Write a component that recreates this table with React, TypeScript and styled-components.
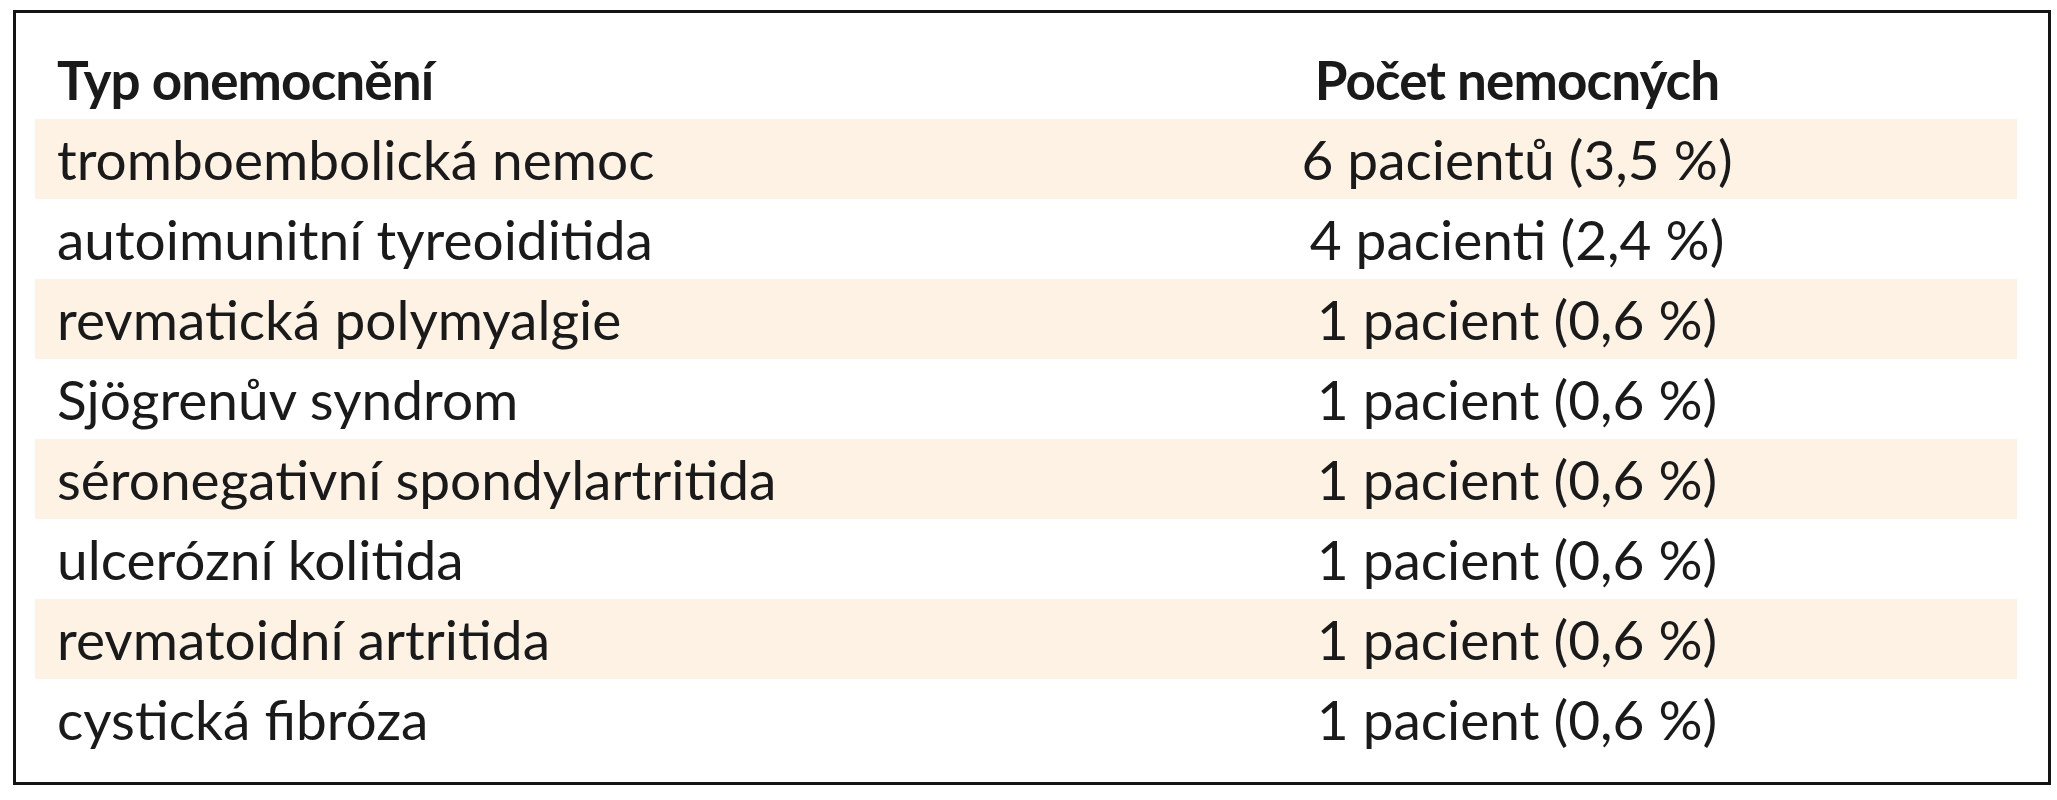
import React from 'react'
import styled, { createGlobalStyle } from 'styled-components'

const GlobalStyle = createGlobalStyle`
  html, body {
    margin: 0;
    padding: 0;
    background: #fff;
  }
  body {
    font-family: Lato, "Noto Sans", sans-serif;
    color: #1a1a1a;
  }
`

const Frame = styled.div`
  box-sizing: border-box;
  width: 2038px;
  margin: 10px 0 0 13px;
  border: 3px solid #141414;
  padding: 26px 31px 23px 19px;
`

const Table = styled.div`
  display: grid;
  grid-template-columns: 1fr 1000px;
`

const Row = styled.div<{ $shaded?: boolean }>`
  display: contents;

  & > div {
    background: ${(p) => (p.$shaded ? '#fef2e5' : 'transparent')};
  }
`

const Cell = styled.div<{ $center?: boolean; $head?: boolean }>`
  height: 80px;
  display: flex;
  align-items: center;
  justify-content: ${(p) => (p.$center ? 'center' : 'flex-start')};
  padding-left: ${(p) => (p.$center ? '0' : '22px')};
  font-size: ${(p) => (p.$head ? '53px' : '55px')};
  font-weight: ${(p) => (p.$head ? 700 : 400)};
  letter-spacing: ${(p) => (p.$head ? '-0.9px' : '0')};
  white-space: nowrap;
`

const rows: [string, string][] = [
  ['tromboembolická nemoc', '6 pacientů (3,5 %)'],
  ['autoimunitní tyreoiditida', '4 pacienti (2,4 %)'],
  ['revmatická polymyalgie', '1 pacient (0,6 %)'],
  ['Sjögrenův syndrom', '1 pacient (0,6 %)'],
  ['séronegativní spondylartritida', '1 pacient (0,6 %)'],
  ['ulcerózní kolitida', '1 pacient (0,6 %)'],
  ['revmatoidní artritida', '1 pacient (0,6 %)'],
  ['cystická fibróza', '1 pacient (0,6 %)'],
]

export default function App() {
  return (
    <>
      <GlobalStyle />
      <Frame>
        <Table>
          <Row>
            <Cell $head>Typ onemocnění</Cell>
            <Cell $head $center>
              Počet nemocných
            </Cell>
          </Row>
          {rows.map(([name, count], i) => (
            <Row key={name} $shaded={i % 2 === 0}>
              <Cell>{name}</Cell>
              <Cell $center>{count}</Cell>
            </Row>
          ))}
        </Table>
      </Frame>
    </>
  )
}
